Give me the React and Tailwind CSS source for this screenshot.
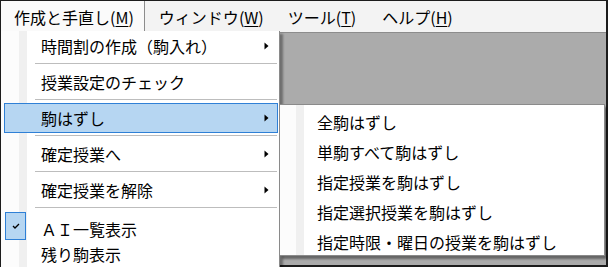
import React from 'react';

const font = { fontFamily: '"Noto Sans CJK JP", "Noto Sans", sans-serif' };

const Arrow = () => (
  <svg width="5" height="8" viewBox="0 0 5 8" className="block">
    <path d="M0.5 0.5 L4.5 4 L0.5 7.5 Z" fill="#000" />
  </svg>
);

const Sep = () => <div className="ml-[34px] mr-[2px] mt-[2px] mb-[3px] h-[1px] bg-[#bdbdbd]" />;

const Row = ({ label, arrow, active }) => (
  <div
    className={`mx-[3px] mr-[1px] h-[30px] flex items-center justify-between pl-[36px] pr-[8px] border leading-none ${
      active ? 'bg-[#b6d6f2] border-[#2f80d6]' : 'border-transparent'
    }`}
  >
    <span>{label}</span>
    {arrow && <Arrow />}
  </div>
);

const MenuTitle = ({ text, k, open }) => (
  <div
    className={`h-full flex items-center leading-none ${
      open ? 'pl-[13px] pr-[10px] bg-[#fafafa] border-r border-[#8c8c8c]' : 'px-[12px]'
    }`}
  >
    {text}(<span className="underline underline-offset-2">{k}</span>)
  </div>
);

export default function App() {
  const sub = ['全駒はずし', '単駒すべて駒はずし', '指定授業を駒はずし', '指定選択授業を駒はずし', '指定時限・曜日の授業を駒はずし'];

  return (
    <div className="w-[608px] h-[267px] border border-r-2 border-b-2 border-[#1c1c1c] bg-[#ababab] text-[16px] text-black" style={font}>
      <div className="relative w-full h-full">
        <div className="h-[32px] bg-[#f3f3f3] border-b border-[#8c8c8c] flex">
          <MenuTitle text="作成と手直し" k="M" open />
          <div className="w-[2px]" />
          <MenuTitle text="ウィンドウ" k="W" />
          <MenuTitle text="ツール" k="T" />
          <div className="w-[2px]" />
          <MenuTitle text="ヘルプ" k="H" />
        </div>

        <div className="absolute left-0 top-[30px] w-[279px] h-[236px] border-r border-[#8a8a8a] shadow-[3px_3px_2px_rgba(0,0,0,0.35)] bg-[linear-gradient(to_right,#fcfcfc_18px,#f0f0f0_18px,#f0f0f0_26px,#ffffff_26px)]">
          <Row label="時間割の作成（駒入れ）" arrow />
          <Sep />
          <Row label="授業設定のチェック" />
          <Sep />
          <Row label="駒はずし" arrow active />
          <Sep />
          <Row label="確定授業へ" arrow />
          <Sep />
          <Row label="確定授業を解除" arrow />
          <Sep />
          <div className="h-[30px] flex items-start pl-[4px] pt-[1px] leading-none">
            <div className="w-[21px] h-[28px] bg-[#b6d6f2] border border-[#2f80d6] flex items-center justify-center">
              <svg width="8" height="6" viewBox="0 0 8 6">
                <path d="M1 3 L3 5 L7 1" stroke="#000" strokeWidth="1.3" fill="none" />
              </svg>
            </div>
            <span className="ml-[15px] mt-[9px]">ＡＩ一覧表示</span>
          </div>
          <div className="h-[26px] flex items-center pl-[40px] leading-none">残り駒表示</div>
        </div>

        <div className="absolute left-[279px] top-[103px] w-[325px] h-[152px] pt-[2px] border border-l-0 border-[#8a8a8a] shadow-[2px_3px_2px_rgba(0,0,0,0.4)] bg-[linear-gradient(to_right,#fcfcfc_16px,#f0f0f0_16px,#f0f0f0_24px,#ffffff_24px)]">
          {sub.map((s) => (
            <div key={s} className="h-[30px] flex items-center pl-[37px] leading-none">
              {s}
            </div>
          ))}
        </div>
      </div>
    </div>
  );
}
